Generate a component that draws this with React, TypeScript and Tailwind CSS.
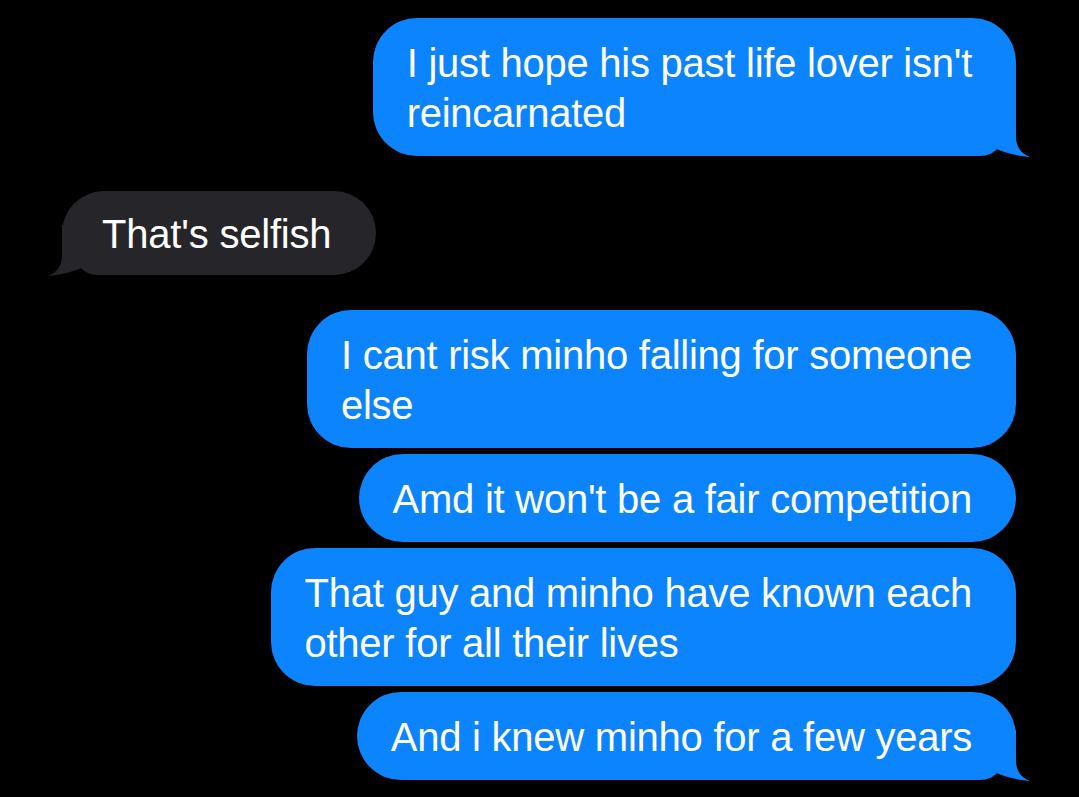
import React from "react";

const BLUE = "#0b84fe";
const GRAY = "#262529";

function Tail({ color, side }: { color: string; side: "right" | "left" }) {
  return (
    <svg
      width={66}
      height={52}
      viewBox="-50 -50 66 52"
      className={
        side === "right"
          ? "absolute right-[-16px] bottom-[-2px]"
          : "absolute left-[-16px] bottom-[-2px] -scale-x-100"
      }
    >
      <path
        d="M0,-50 L0,-20 C0,-10 4,-3 14,1 C4,0 -12,-3 -19,-7 C-23,-3 -28,0 -36,0 L-50,0 L-50,-50 Z"
        fill={color}
      />
    </svg>
  );
}

function Sent({ lines, tail }: { lines: string[]; tail?: boolean }) {
  return (
    <div className="relative self-end rounded-[44px] bg-[#0b84fe] pl-[34px] pr-[44px] pt-[20px] pb-[18px] text-[40px] leading-[50px] tracking-[-0.25px] text-white whitespace-nowrap">
      {tail && <Tail color={BLUE} side="right" />}
      <div className="relative">
        {lines.map((l, i) => (
          <div key={i}>{l}</div>
        ))}
      </div>
    </div>
  );
}

export default function App() {
  return (
    <div
      className="min-h-[797px] w-full bg-black pt-[18px] pl-[62px] pr-[63px] flex flex-col"
      style={{ fontFamily: '"Liberation Sans", Arial, sans-serif' }}
    >
      <Sent lines={["I just hope his past life lover isn't", "reincarnated"]} tail />
      <div className="relative self-start mt-[35px] rounded-[44px] bg-[#262529] pl-[40px] pr-[45px] pt-[18px] pb-[16px] text-[40px] leading-[50px] tracking-[-0.2px] text-white whitespace-nowrap">
        <Tail color={GRAY} side="left" />
        <div className="relative">That's selfish</div>
      </div>
      <div className="mt-[35px] flex flex-col gap-[6px]">
        <Sent lines={["I cant risk minho falling for someone", "else"]} />
        <Sent lines={["Amd it won't be a fair competition"]} />
        <Sent lines={["That guy and minho have known each", "other for all their lives"]} />
        <Sent lines={["And i knew minho for a few years"]} tail />
      </div>
    </div>
  );
}
